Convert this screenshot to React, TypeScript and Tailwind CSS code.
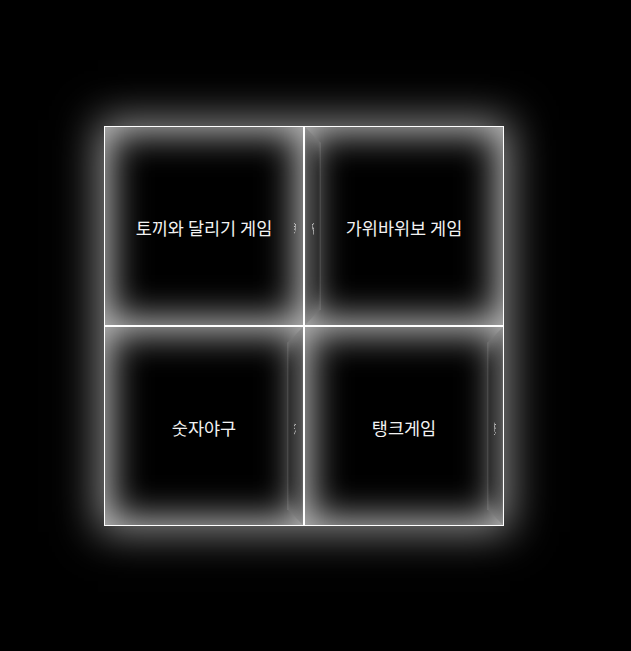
import React from "react";

type Cell = {
  title: string;
  side: "left" | "right";
  solid: boolean;
};

const cells: Cell[] = [
  { title: "토끼와 달리기 게임", side: "right", solid: false },
  { title: "가위바위보 게임", side: "left", solid: true },
  { title: "숫자야구", side: "right", solid: true },
  { title: "탱크게임", side: "right", solid: true },
];

const font = { fontFamily: '"Noto Sans CJK KR", "Noto Sans", sans-serif' };

function Tile({ cell }: { cell: Cell }) {
  const sideClass =
    cell.side === "left"
      ? "origin-left [transform:rotateY(90deg)]"
      : "origin-right [transform:rotateY(-90deg)]";
  const faceLook = cell.solid
    ? "bg-black/30 shadow-[inset_0_0_30px_4px_rgba(255,255,255,0.35)]"
    : "bg-transparent";
  return (
    <div className="relative w-[200px] h-[200px] [perspective:1000px]">
      <div className="absolute inset-0 flex items-center justify-center bg-black shadow-[inset_0_0_36px_7px_rgba(255,255,255,0.75)]">
        <span className="text-[17.5px] leading-none text-[#f2f2f2] pt-[3px]">{cell.title}</span>
      </div>
      <div
        className={`absolute inset-0 flex items-center justify-center ${sideClass} ${faceLook}`}
      >
        <span className="text-[14px] leading-none text-[#cfcfcf] pt-[3px]">{cell.title.slice(0, 2)}</span>
      </div>
      <div className="absolute inset-0 border border-white pointer-events-none" />
    </div>
  );
}

export default function App() {
  return (
    <div className="w-full h-[651px] bg-black overflow-hidden pt-[126px] pl-[104px]" style={font}>
      <div className="grid grid-cols-2 w-[400px] h-[400px] shadow-[0_0_40px_6px_rgba(255,255,255,0.55)]">
        {cells.map((c) => (
          <Tile key={c.title} cell={c} />
        ))}
      </div>
    </div>
  );
}
